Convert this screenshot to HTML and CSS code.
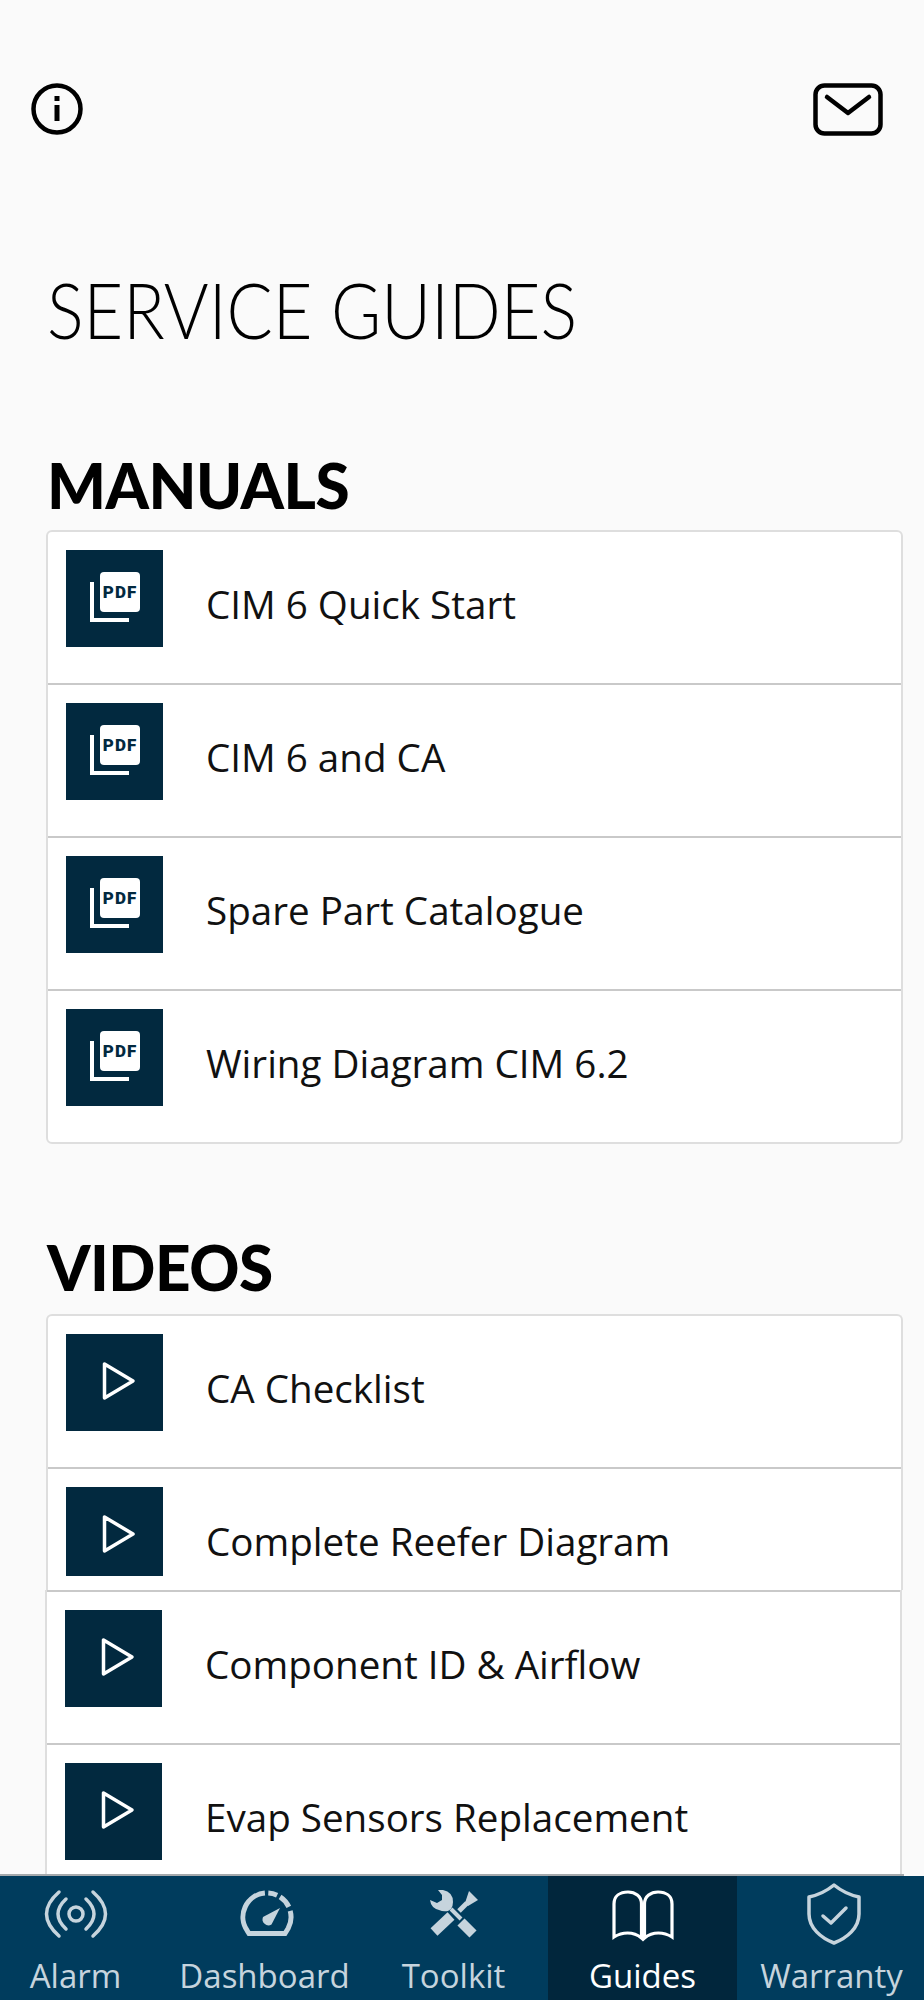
FILE: index.html
```html
<!DOCTYPE html>
<html lang="en">
<head>
    <meta charset="UTF-8">
    <meta name="viewport" content="width=device-width, initial-scale=1.0">
    <title>Service Guides</title>
    <link rel="stylesheet" href="styles.css">
</head>
<body>
    <div class="screen">
        <div class="content">
            <div class="top-icons">
                <svg class="icon-info" viewBox="0 0 52 52">
                    <circle cx="26" cy="26" r="23.5" fill="none" stroke="#000" stroke-width="4.5"/>
                    <rect x="23.5" y="13" width="5" height="5" fill="#000"/>
                    <rect x="23.5" y="22" width="5" height="16" fill="#000"/>
                </svg>
                <svg class="icon-mail" viewBox="0 0 70 53">
                    <rect x="2.5" y="2.5" width="65" height="48" rx="9" fill="none" stroke="#000" stroke-width="4.5"/>
                    <path d="M14 14 L35 30 L56 14" fill="none" stroke="#000" stroke-width="4.5" stroke-linecap="round" stroke-linejoin="round"/>
                </svg>
            </div>

            <h1>SERVICE GUIDES</h1>

            <h2>MANUALS</h2>
            <div class="card">
                <div class="row">
                    <div class="thumb">
                        <svg viewBox="0 0 97 97">
                            <path d="M26 32 V70 H63" fill="none" stroke="#fff" stroke-width="4"/>
                            <rect x="34" y="22" width="40" height="40" rx="4" fill="#fff"/>
                            <text x="54" y="48" class="pdf-label" text-anchor="middle">PDF</text>
                        </svg>
                    </div>
                    <span class="row-title">CIM 6 Quick Start</span>
                </div>
                <div class="row">
                    <div class="thumb">
                        <svg viewBox="0 0 97 97">
                            <path d="M26 32 V70 H63" fill="none" stroke="#fff" stroke-width="4"/>
                            <rect x="34" y="22" width="40" height="40" rx="4" fill="#fff"/>
                            <text x="54" y="48" class="pdf-label" text-anchor="middle">PDF</text>
                        </svg>
                    </div>
                    <span class="row-title">CIM 6 and CA</span>
                </div>
                <div class="row">
                    <div class="thumb">
                        <svg viewBox="0 0 97 97">
                            <path d="M26 32 V70 H63" fill="none" stroke="#fff" stroke-width="4"/>
                            <rect x="34" y="22" width="40" height="40" rx="4" fill="#fff"/>
                            <text x="54" y="48" class="pdf-label" text-anchor="middle">PDF</text>
                        </svg>
                    </div>
                    <span class="row-title">Spare Part Catalogue</span>
                </div>
                <div class="row">
                    <div class="thumb">
                        <svg viewBox="0 0 97 97">
                            <path d="M26 32 V70 H63" fill="none" stroke="#fff" stroke-width="4"/>
                            <rect x="34" y="22" width="40" height="40" rx="4" fill="#fff"/>
                            <text x="54" y="48" class="pdf-label" text-anchor="middle">PDF</text>
                        </svg>
                    </div>
                    <span class="row-title">Wiring Diagram CIM 6.2</span>
                </div>
            </div>

            <h2 class="videos-heading">VIDEOS</h2>
            <div class="card card-cut">
                <div class="row">
                    <div class="thumb">
                        <svg viewBox="0 0 97 97"><path d="M38.5 30 V64 L67 47 Z" fill="none" stroke="#fff" stroke-width="3.5" stroke-linejoin="round"/></svg>
                    </div>
                    <span class="row-title">CA Checklist</span>
                </div>
                <div class="row row-cut">
                    <div class="thumb thumb-cut">
                        <svg viewBox="0 0 97 97"><path d="M38.5 30 V64 L67 47 Z" fill="none" stroke="#fff" stroke-width="3.5" stroke-linejoin="round"/></svg>
                    </div>
                    <span class="row-title">Complete Reefer Diagram</span>
                </div>
            </div>
            <div class="card card-lower">
                <div class="row">
                    <div class="thumb">
                        <svg viewBox="0 0 97 97"><path d="M38.5 30 V64 L67 47 Z" fill="none" stroke="#fff" stroke-width="3.5" stroke-linejoin="round"/></svg>
                    </div>
                    <span class="row-title">Component ID &amp; Airflow</span>
                </div>
                <div class="row">
                    <div class="thumb">
                        <svg viewBox="0 0 97 97"><path d="M38.5 30 V64 L67 47 Z" fill="none" stroke="#fff" stroke-width="3.5" stroke-linejoin="round"/></svg>
                    </div>
                    <span class="row-title">Evap Sensors Replacement</span>
                </div>
            </div>
        </div>

        <nav class="tabs">
            <div class="tab">
                <svg viewBox="0 0 70 64" fill="none" stroke="currentColor" stroke-width="3.5" stroke-linecap="round">
                    <circle cx="35" cy="32" r="7"/>
                    <path d="M25 17 Q9 32 25 47"/>
                    <path d="M45 17 Q61 32 45 47"/>
                    <path d="M18 10 Q-7 32 18 54"/>
                    <path d="M52 10 Q77 32 52 54"/>
                </svg>
                <span>Alarm</span>
            </div>
            <div class="tab">
                <svg viewBox="0 0 70 64" fill="none" stroke="currentColor" stroke-width="5">
                    <path d="M34.9 11.1 A24 24 0 0 0 17.3 48.8 L19 51.5 H55 L58.2 46.3 A24 24 0 0 0 60.2 28.8"/>
                    <path d="M38.3 11 A24 24 0 0 1 47.1 13.2"/>
                    <path d="M50.1 14.9 A24 24 0 0 1 58.8 24.9"/>
                    <path d="M50 26 L41.5 42.5 A6 6 0 0 1 33 35 Z" fill="currentColor" stroke="none"/>
                </svg>
                <span>Dashboard</span>
            </div>
            <div class="tab">
                <svg viewBox="0 0 70 64" fill="currentColor">
                    <path d="M19 8 L24 8 Q34 10 34 20 Q34 24 32 27 L29 29 Q24 30 20 28 Q12 26 11 18 L18 21 L23 18 L23 13 Z"/>
                    <path d="M32 27 L42 37" stroke="currentColor" stroke-width="4"/>
                    <path d="M42 40 L54 52" stroke="currentColor" stroke-width="10"/>
                    <path d="M15 50 L32 34" stroke="currentColor" stroke-width="10"/>
                    <path d="M40 29 L48 21" stroke="currentColor" stroke-width="5"/>
                    <path d="M46 21 L50 9 L59 18 L49 24 Z"/>
                </svg>
                <span>Toolkit</span>
            </div>
            <div class="tab tab-active">
                <svg viewBox="0 0 70 64" fill="none" stroke="currentColor" stroke-width="3.2">
                    <path d="M33.5 56 V22 C33.5 14 27 10 20 10 C12 10 6 14 6 22 V55 C14 50 25 49 33.5 56 Z"/>
                    <path d="M36.5 56 V22 C36.5 14 43 10 50 10 C58 10 64 14 64 22 V55 C56 50 45 49 36.5 56 Z"/>
                </svg>
                <span>Guides</span>
            </div>
            <div class="tab">
                <svg viewBox="0 0 70 64" fill="none" stroke="currentColor" stroke-width="3.5" stroke-linecap="round" stroke-linejoin="round">
                    <path d="M37 3 Q48 12 62 15 V32 C62 46 50 56 37 61 C24 56 12 46 12 32 V15 Q26 12 37 3 Z"/>
                    <path d="M26 34 L34 41 L49 26"/>
                </svg>
                <span>Warranty</span>
            </div>
        </nav>
    </div>
</body>
</html>
```

FILE: styles.css
```css
* {
    box-sizing: border-box;
}

body {
    margin: 0;
    background-color: #fafafa;
    font-family: "Open Sans", "Liberation Sans", sans-serif;
    color: #000;
}

.screen {
    height: 100vh;
    display: flex;
    flex-direction: column;
    overflow: hidden;
}

.content {
    flex: 1;
    min-height: 0;
    overflow: hidden;
}

.top-icons {
    display: flex;
    justify-content: space-between;
    padding: 83px 41px 0 31px;
}

.icon-info {
    width: 52px;
    height: 52px;
}

.icon-mail {
    width: 70px;
    height: 53px;
}

h1 {
    margin: 134px 0 0 47px;
    font-family: "Lato", sans-serif;
    font-size: 76px;
    line-height: 80px;
    font-weight: 300;
    white-space: nowrap;
    transform: scaleX(0.9);
    transform-origin: left;
}

h2 {
    margin: 103px 0 13px 47px;
    font-family: "Lato", sans-serif;
    font-size: 62px;
    line-height: 64px;
    font-weight: 900;
    letter-spacing: -0.5px;
}

.videos-heading {
    margin-top: 91px;
    margin-bottom: 15px;
}

.card {
    width: 857px;
    margin-left: 46px;
    background-color: #fff;
    border: 2px solid #dedede;
    border-radius: 6px;
}

.card-cut {
    border-bottom: none;
    border-radius: 6px 6px 0 0;
}

.card-lower {
    margin-left: 45px;
    border-top: none;
    border-bottom: none;
    border-radius: 0;
}

.row {
    display: flex;
    align-items: flex-start;
    padding: 18px 0 30px 18px;
    border-top: 2px solid #c9c9c9;
}

.card > .row:first-child {
    border-top: none;
}

.card-lower > .row:first-child {
    border-top: 2px solid #c9c9c9;
}

.row-cut {
    height: 123px;
    padding-bottom: 0;
    overflow: hidden;
}

.thumb {
    flex: none;
    width: 97px;
    height: 97px;
    background-color: #02293f;
    overflow: hidden;
}

.thumb svg {
    display: block;
    width: 97px;
    height: 97px;
}

.thumb-cut {
    height: 89px;
}

.pdf-label {
    font-family: "Roboto", sans-serif;
    font-size: 17px;
    font-weight: 900;
    letter-spacing: 1px;
    fill: #02293f;
}

.row-title {
    margin: 6px 0 0 43px;
    font-size: 38.6px;
    line-height: 97px;
    color: #111;
}

.tabs {
    flex: none;
    height: 126px;
    margin-left: -19px;
    display: grid;
    grid-template-columns: repeat(5, 189px);
    background-color: #003c5d;
    border-top: 2px solid;
    border-image: linear-gradient(to right, #a5a9ac 922px, #fafafa 922px) 1;
}

.tab {
    display: flex;
    flex-direction: column;
    align-items: center;
    padding-top: 6px;
    color: #c6d4dd;
}

.tab svg {
    display: block;
    width: 70px;
    height: 64px;
}

.tab span {
    margin-top: 10px;
    font-size: 33px;
    line-height: 40px;
    white-space: nowrap;
}

.tab-active {
    background-color: #01263c;
    color: #fff;
}
```
